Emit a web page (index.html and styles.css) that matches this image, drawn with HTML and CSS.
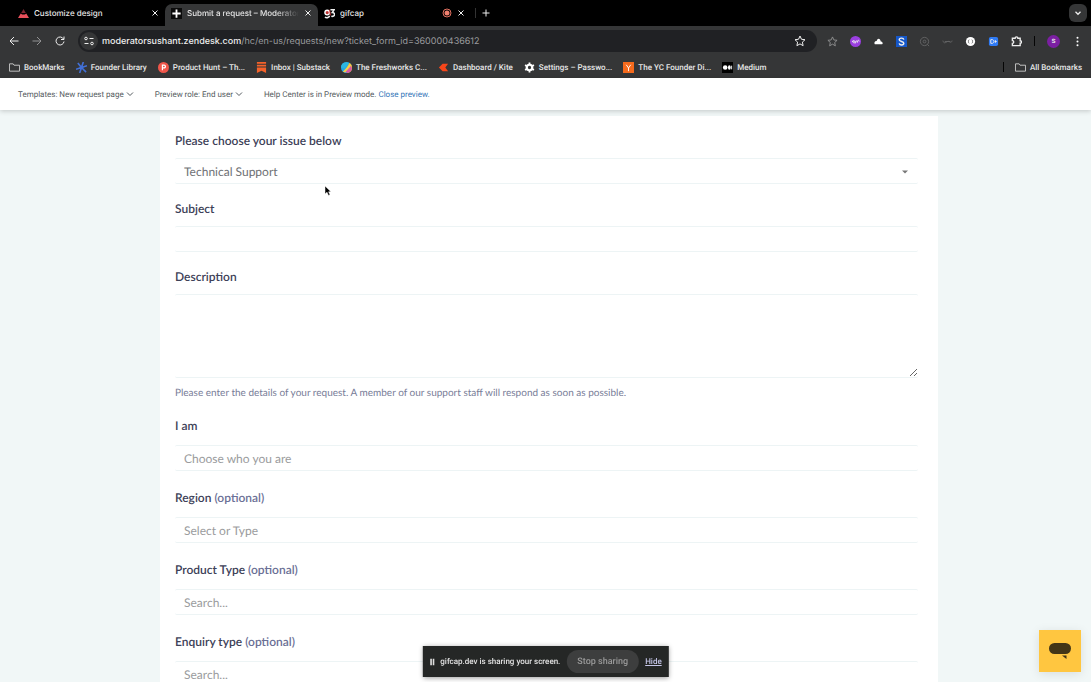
FILE: index.html
```
<!DOCTYPE html>
<html lang="en-US">
<head>
    <meta charset="UTF-8">
    <meta name="viewport" content="width=device-width, initial-scale=1.0">
    <title>Submit a request – Moderator</title>
    <link rel="stylesheet" href="styles.css">
</head>
<body>
    <header class="browser">
        <div class="tabs">
            <div class="tab">
                <svg class="icon" viewBox="0 0 12 12"><path d="M6 1l2.5 4.500h-5z" fill="#7c2430"/><path d="M0 11l3-5 1.500 1h3L9 6l3 5z" fill="#e8505b"/></svg>
                <span class="tab-title">Customize design</span>
                <button class="close" aria-label="Close tab"><svg viewBox="0 0 8 8"><path d="M1.5 1.5l5 5M6.5 1.5l-5 5"/></svg></button>
            </div>
            <div class="tab active">
                <svg class="icon" viewBox="0 0 12 12"><path d="M0 0h12v12H0z" fill="#0b0b0b"/><path d="M6 1.500v9M1.500 6h9" stroke="#fff" stroke-width="2"/></svg>
                <span class="tab-title fade">Submit a request – Moderator</span>
                <button class="close" aria-label="Close tab"><svg viewBox="0 0 8 8"><path d="M1.5 1.5l5 5M6.5 1.5l-5 5"/></svg></button>
            </div>
            <div class="tab">
                <svg class="icon" viewBox="0 0 12 12"><circle cx="3.5" cy="5" r="2.5" fill="#b33" stroke="#fff" stroke-width="1.5"/><path d="M6 8.500a3 2 0 0 1-5 1.500M7 2h4l-2 3c4 0 3 5-1 4" fill="none" stroke="#eee" stroke-width="1.700"/><path d="M6 2l1 6" stroke="#d33"/></svg>
                <span class="tab-title">gifcap</span>
                <svg class="record" viewBox="0 0 10 10"><circle cx="5" cy="5" r="4" fill="none" stroke="#e0705f"/><circle cx="5" cy="5" r="2.500" fill="#f0806f"/></svg>
                <button class="close" aria-label="Close tab"><svg viewBox="0 0 8 8"><path d="M1.5 1.5l5 5M6.5 1.5l-5 5"/></svg></button>
            </div>
            <span class="tab-line"></span>
            <button class="close" aria-label="New tab"><svg viewBox="0 0 8 8"><path d="M4 .5v7M.5 4h7"/></svg></button>
            <button class="tab-search" aria-label="Search tabs"><svg viewBox="0 0 8 8"><path d="M2 3l2 2 2-2"/></svg></button>
        </div>

        <div class="toolbar">
            <nav class="history">
                <button aria-label="Back"><svg viewBox="0 0 12 12"><path d="M10.500 6h-8M6 2L2 6l4 4"/></svg></button>
                <button class="dim" aria-label="Forward"><svg viewBox="0 0 12 12"><path d="M1.500 6h8M6 2l4 4-4 4"/></svg></button>
                <button aria-label="Reload"><svg viewBox="0 0 12 12"><path d="M9.500 4A4 4 0 1 0 10 6.500M10 1.500v3H7"/></svg></button>
            </nav>
            <div class="address">
                <span class="site-info"><svg viewBox="0 0 12 12"><path d="M6.500 3.500h4M1.500 8.500h4"/><circle cx="3" cy="3.500" r="1.300"/><circle cx="9" cy="8.500" r="1.300"/></svg></span>
                <span class="url"><b>moderatorsushant.zendesk.com</b>/hc/en-us/requests/new?ticket_form_id=360000436612</span>
                <button aria-label="Bookmark this tab"><svg viewBox="0 0 12 12"><path d="M6 1l1.500 3.300 3.500.4-2.600 2.400.7 3.600L6 8.900l-3.100 1.800.7-3.600L1 4.700l3.500-.4z"/></svg></button>
            </div>
            <div class="extensions">
                <svg class="dim" viewBox="0 0 12 12"><path d="M6 1l1.500 3.300 3.500.4-2.600 2.400.7 3.600L6 8.900l-3.100 1.800.7-3.600L1 4.700l3.500-.4z"/></svg>
                <svg viewBox="0 0 12 12"><circle cx="6" cy="6" r="6" fill="#9a3fe0" stroke="none"/><path d="M2.500 6.500c0-2 3-2 3 0s-3 1-2-1M6 8c0-4 2-3 2-1 0-3 2-3 2-1"/></svg>
                <svg viewBox="0 0 12 12"><path d="M2 9h8c1.500-1 0-3-1.500-3C8 2.500 5 1.500 4 5.500 1.500 5.500 1 8 2 9z" fill="#fff" stroke="none"/></svg>
                <svg viewBox="0 0 12 12"><path d="M0 0h12v12H0z" fill="#1557c8" stroke="none"/><path d="M8.500 4C8 1.500 3.500 2 3.500 4.200S8.500 5.700 8.500 8 4 10.500 3.500 8" stroke-width="1.600"/></svg>
                <svg class="faint" viewBox="0 0 12 12"><circle cx="6" cy="6" r="4.500"/><circle cx="6" cy="6" r="1.500"/><path d="M9 9l2 2"/></svg>
                <svg class="faint" viewBox="0 0 12 12"><path d="M1 5c1 4 3 2 5 1s4 3 5-1M3 6h6"/></svg>
                <svg viewBox="0 0 12 12"><circle cx="6" cy="6" r="5" fill="#fff" stroke="none"/><path d="M4.500 4c-1 0-1 4 0 4M7.500 4c1 0 1 4 0 4" stroke="#666"/></svg>
                <svg viewBox="0 0 12 12"><rect x="1" y="1" width="10" height="10" rx="2" fill="#2f7bf5" stroke="none"/><path d="M3 4v4h2c2-1 2-3 0-4zM8 4.500v3M7.500 6h2"/></svg>
                <svg viewBox="0 0 12 12"><path d="M1.500 2.500h3c0-2 3-2 3 0H10v2.700c2 0 2 2.600 0 2.600v2.700H1.500V8c2 0 2-3 0-3z" stroke-width="1.500"/></svg>
                <span class="divider"></span>
                <span class="avatar">s</span>
                <svg viewBox="0 0 12 12"><g fill="#fff" stroke="none"><circle cx="6" cy="2" r="1.100"/><circle cx="6" cy="6" r="1.100"/><circle cx="6" cy="10" r="1.100"/></g></svg>
            </div>
        </div>

        <nav class="bookmarks">
            <a href="#"><svg class="icon" viewBox="0 0 12 12"><path d="M.5 2h4l1 1.500h6V10H.5z" fill="none" stroke="#ccc"/></svg>BookMarks</a>
            <a href="#"><svg class="icon" viewBox="0 0 12 12"><path d="M6 6L2 1M6 6L8 0M6 6l6-2M6 6l5 5M6 6l-2 6M6 6L0 8" stroke="#4270d6" stroke-width="1.800"/><circle cx="6" cy="6" r="2" fill="#4270d6"/></svg>Founder Library</a>
            <a href="#"><svg class="icon" viewBox="0 0 12 12"><circle cx="6" cy="6" r="6" fill="#f0564a"/><path d="M4.800 9V3.500h1.800c2 0 2 3 0 3H5" fill="none" stroke="#fff" stroke-width="1.300"/></svg>Product Hunt – Th...</a>
            <a href="#"><svg class="icon" viewBox="0 0 12 12"><path d="M1 0h10v2H1zM1 3h10v2H1zM1 6h10v6L6 9.500 1 12z" fill="#f5622a"/></svg>Inbox | Substack</a>
            <a href="#"><svg class="icon" viewBox="0 0 12 12"><circle cx="6" cy="6" r="6" fill="#21a8e8"/><path d="M9 .800A6 6 0 0 1 7 12L5 9z" fill="#f2b52f"/><path d="M0 6a6 6 0 0 1 9-5L4 7z" fill="#2bb6e0"/><path d="M2 10.500L10 2l1 2-6 7.500z" fill="#f2d04a"/><path d="M5 11l6-7 .8 3A6 6 0 0 1 7 12z" fill="#d957a8"/></svg>The Freshworks C...</a>
            <a href="#"><svg class="icon" viewBox="0 0 12 12"><path d="M1 6l4-4h6L8 6l3 4H5z" fill="#f6461a"/></svg>Dashboard / Kite</a>
            <a href="#"><svg class="icon" viewBox="0 0 12 12"><circle cx="6" cy="6" r="3" fill="none" stroke="#fff" stroke-width="2.400"/><path d="M6 .5v2M6 9.500v2M1.200 3.300l1.600 1M9.200 7.700l1.600 1M1.200 8.700l1.600-1M9.200 4.300l1.600-1" stroke="#fff" stroke-width="2"/></svg>Settings – Passwo...</a>
            <a href="#"><svg class="icon" viewBox="0 0 12 12"><path d="M0 0h12v12H0z" fill="#f56a1d"/><path d="M3.500 3L6 6.500 8.500 3M6 6.500V10" fill="none" stroke="#fff"/></svg>The YC Founder Di...</a>
            <a href="#"><svg class="icon" viewBox="0 0 12 12"><path d="M0 0h12v12H0z" fill="#000"/><circle cx="3.500" cy="6" r="2.500" fill="#fff"/><ellipse cx="8" cy="6" rx="1.500" ry="2.500" fill="#fff"/><path d="M10.500 4v4" stroke="#fff"/></svg>Medium</a>
            <span class="divider push"></span>
            <a href="#"><svg class="icon" viewBox="0 0 12 12"><path d="M.5 2h4l1 1.500h6V10H.5z" fill="none" stroke="#ccc"/></svg>All Bookmarks</a>
        </nav>
    </header>

    <div class="preview-bar">
        <button>Templates: New request page <svg viewBox="0 0 8 8"><path d="M1 2.500l3 3 3-3"/></svg></button>
        <button>Preview role: End user <svg viewBox="0 0 8 8"><path d="M1 2.500l3 3 3-3"/></svg></button>
        <p>Help Center is in Preview mode. <a href="#">Close preview.</a></p>
    </div>

    <main class="page">
        <form class="request-form">
            <div class="field">
                <label for="issue">Please choose your issue below</label>
                <div class="select">
                    <select id="issue"><option>Technical Support</option></select>
                    <svg viewBox="0 0 8 4"><path d="M0 0h8L4 4z"/></svg>
                </div>
            </div>
            <div class="field">
                <label for="subject">Subject</label>
                <input type="text" id="subject">
            </div>
            <div class="field">
                <label for="description">Description</label>
                <textarea id="description"></textarea>
                <p class="hint">Please enter the details of your request. A member of our support staff will respond as soon as possible.</p>
            </div>
            <div class="field wide">
                <label for="iam">I am</label>
                <input type="text" id="iam" placeholder="Choose who you are">
            </div>
            <div class="field wide">
                <label for="region">Region <span>(optional)</span></label>
                <input type="text" id="region" placeholder="Select or Type">
            </div>
            <div class="field wide">
                <label for="product">Product Type <span>(optional)</span></label>
                <input type="text" id="product" placeholder="Search...">
            </div>
            <div class="field wide">
                <label for="enquiry">Enquiry type <span>(optional)</span></label>
                <input type="text" id="enquiry" placeholder="Search...">
            </div>
        </form>
    </main>

    <div class="sharing">
        <svg viewBox="0 0 6 8"><path d="M1.500 0v8M4.500 0v8"/></svg>
        <span>gifcap.dev is sharing your screen.</span>
        <button>Stop sharing</button>
        <a href="#">Hide</a>
    </div>

    <button class="chat" aria-label="Open chat">
        <svg viewBox="0 0 22 18"><rect x="0" y="1" width="22" height="11" rx="5.500"/><path d="M13 13.500h4.500V17z"/></svg>
    </button>

    <svg class="cursor" viewBox="0 0 8 12"><path d="M1 1v8l2-1.800L4.500 10.500l1.500-.7L4.600 6.800H7z"/></svg>
</body>
</html>
```
FILE: styles.css
```
* {
    box-sizing: border-box;
}

body {
    margin: 0;
    height: 100vh;
    display: flex;
    flex-direction: column;
    overflow: hidden;
    font-family: Lato, sans-serif;
    font-size: 12px;
    text-rendering: geometricPrecision;
    background: #f1f7f7;
}

button {
    border: 0;
    padding: 0;
    background: none;
    color: inherit;
    font: inherit;
    text-rendering: inherit;
    display: flex;
    align-items: center;
    cursor: pointer;
}

p {
    margin: 0;
}

/* browser window */
.browser {
    flex: none;
    background: #353637;
    color: #e6e6e6;
    font-family: Roboto, sans-serif;
    font-size: 8px;
    font-weight: 500;
}

.browser button svg,
.extensions svg,
.site-info svg {
    fill: none;
    stroke: #eee;
}

.icon {
    width: 11px;
    height: 11px;
    flex: none;
}

.tabs {
    display: flex;
    align-items: center;
    height: 26px;
    padding: 0 8px 0 12px;
    background: #000;
    font-family: Inter, sans-serif;
}

.tab {
    display: flex;
    align-items: center;
    gap: 5px;
    width: 153px;
    height: 22px;
    padding: 0 6px;
}

.tab.active {
    align-self: flex-end;
    padding-bottom: 4px;
    background: #353637;
    border-radius: 7px 7px 0 0;
}

.tab-title {
    flex: 1;
    overflow: hidden;
    white-space: nowrap;
}

.fade {
    mask-image: linear-gradient(to right, #000 80%, transparent);
}

.close svg {
    display: block;
    width: 8px;
    height: 8px;
}

.record {
    width: 10px;
    height: 10px;
}

.tab-line {
    width: 1px;
    height: 10px;
    margin: 0 6px 0 4px;
    background: #333;
}

.tab-search {
    justify-content: center;
    width: 18px;
    height: 18px;
    margin-left: auto;
    margin-right: -4px;
    border-radius: 6px;
    background: #353637;
}

.tab-search svg {
    width: 10px;
    height: 10px;
}

.toolbar {
    display: flex;
    align-items: center;
    height: 30px;
    padding: 0 8px;
}

.history {
    display: flex;
    gap: 11px;
    margin-right: 12px;
}

.toolbar svg {
    display: block;
    width: 12px;
    height: 12px;
}

.dim {
    opacity: .5;
}

.faint {
    opacity: .25;
}

.address {
    flex: 1;
    display: flex;
    align-items: center;
    height: 22px;
    padding: 0 11px 0 2px;
    border-radius: 11px;
    background: #202124;
    color: #9a9b9e;
    font-family: Inter, sans-serif;
    font-size: 9px;
    font-weight: 400;
}

.address b {
    color: #eee;
    font-weight: 500;
}

.site-info {
    padding: 3px;
    margin-right: 4px;
    border-radius: 50%;
    background: #353637;
}

.url {
    flex: 1;
}

.extensions {
    display: flex;
    align-items: center;
    gap: 12px;
    margin-left: 10px;
}

.extensions svg {
    width: 11px;
    height: 11px;
}

.divider {
    width: 1px;
    height: 10px;
    background: #050505;
}

.avatar {
    width: 13px;
    height: 13px;
    border-radius: 50%;
    background: #7b1fa2;
    line-height: 12px;
    text-align: center;
}

.bookmarks {
    display: flex;
    align-items: center;
    gap: 11px;
    height: 22px;
    padding: 0 9px;
    white-space: nowrap;
}

.bookmarks a {
    display: flex;
    align-items: center;
    gap: 4px;
    color: inherit;
    text-decoration: none;
}

.push {
    margin-left: auto;
}

/* help center preview */
.preview-bar {
    position: relative;
    flex: none;
    display: flex;
    align-items: center;
    gap: 21px;
    height: 32px;
    padding: 0 18px;
    background: #fff;
    box-shadow: 0 1px 5px rgba(0, 0, 0, .2);
    color: #555b60;
    font-family: Roboto, sans-serif;
    font-size: 8px;
}

.preview-bar svg {
    width: 8px;
    height: 8px;
    margin-left: 2px;
    fill: none;
    stroke: #555b60;
}

.preview-bar a {
    color: #3375b8;
    text-decoration: none;
}

.page {
    flex: 1;
    min-height: 0;
    padding: 6px 0 0 7px;
    overflow-y: auto;
    scrollbar-width: none;
}

.request-form {
    max-width: 778px;
    margin: 0 auto;
    padding: 17px 20px 24px 15px;
    background: #fff;
}

.field {
    margin-bottom: 17px;
}

.field label {
    display: block;
    margin-bottom: 9px;
    color: #3d4158;
    font-weight: 600;
    line-height: 16px;
}

.field label span {
    color: #6b7096;
}

.field.wide {
    margin-bottom: 19px;
}

.field.wide label {
    margin-bottom: 11px;
}

.field input,
.field select,
.field textarea {
    display: block;
    width: 100%;
    height: 26px;
    padding: 0 9px;
    border: solid #edf4f5;
    border-width: 1px 0;
    border-radius: 2px;
    outline: 0;
    background: #fff;
    color: #6f7175;
    font: inherit;
    text-rendering: inherit;
}

.field textarea {
    height: 84px;
    resize: vertical;
}

.field input::placeholder {
    color: #9a9b9d;
}

.select {
    position: relative;
}

.field select {
    appearance: none;
}

.select svg {
    position: absolute;
    top: 12px;
    right: 10px;
    width: 6px;
    height: 4px;
    fill: #777;
}

.hint {
    margin-top: 7px;
    color: #787d98;
    font-size: 10px;
    line-height: 16px;
}

/* overlays */
.sharing {
    position: fixed;
    left: 50%;
    bottom: 5px;
    transform: translateX(-50%);
    display: flex;
    align-items: center;
    gap: 6px;
    height: 31px;
    padding: 0 7px;
    background: #252726;
    box-shadow: 0 1px 5px rgba(0, 0, 0, .4);
    color: #e2e2e2;
    font-family: Roboto, sans-serif;
    font-size: 8px;
    font-weight: 500;
    white-space: nowrap;
}

.sharing svg {
    width: 5px;
    height: 8px;
    stroke: #ddd;
    stroke-width: 2;
}

.sharing button {
    height: 23px;
    padding: 0 11px;
    border-radius: 12px;
    background: #3d3e3e;
    color: #999;
    font-size: 9px;
}

.sharing a {
    color: #c5c6e8;
}

.chat {
    position: fixed;
    right: 10px;
    bottom: 10px;
    justify-content: center;
    width: 42px;
    height: 42px;
    background: #ffc640;
    box-shadow: 0 2px 10px rgba(0, 0, 0, .1);
}

.chat svg {
    width: 22px;
    height: 18px;
    fill: #423517;
}

.cursor {
    position: fixed;
    left: 324px;
    top: 185px;
    width: 8px;
    height: 12px;
    stroke: #fff;
    stroke-width: .5;
}
```
